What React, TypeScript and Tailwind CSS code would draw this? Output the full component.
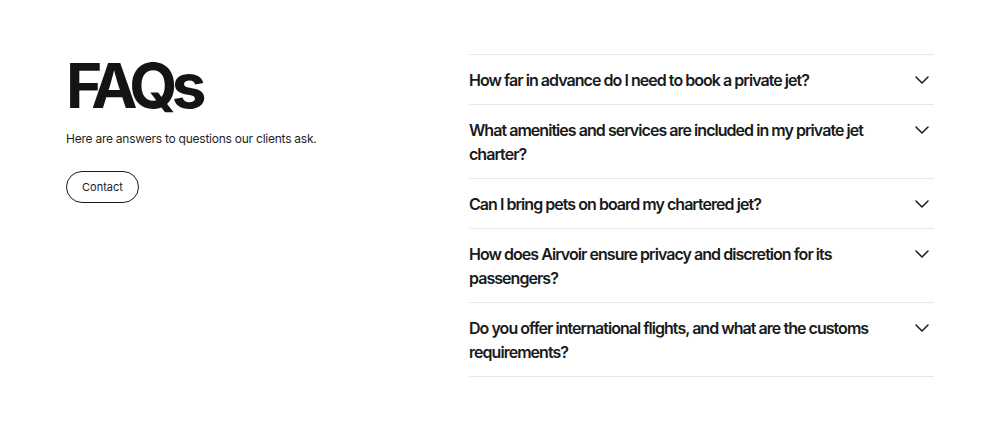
import React, { useState } from 'react';
import { ChevronDown } from 'lucide-react';

const questions = [
  'How far in advance do I need to book a private jet?',
  'What amenities and services are included in my private jet charter?',
  'Can I bring pets on board my chartered jet?',
  'How does Airvoir ensure privacy and discretion for its passengers?',
  'Do you offer international flights, and what are the customs requirements?',
];

function FaqRow({ q }: { q: string }) {
  const [open, setOpen] = useState(false);
  return (
    <div className="border-b border-[#e8e8e8]">
      <button
        onClick={() => setOpen(!open)}
        className="w-full flex items-start justify-between gap-6 py-[12.5px] text-left"
      >
        <span className="text-[16px] leading-[24px] font-semibold tracking-[-0.06em] text-[#1a1a1a]">
          {q}
        </span>
        <ChevronDown className="w-6 h-6 shrink-0 text-[#1a1a1a]" strokeWidth={1.5} />
      </button>
    </div>
  );
}

export default function App() {
  return (
    <div className="min-h-screen bg-white font-['Inter',sans-serif] text-[#1a1a1a]">
      <div className="max-w-[868px] mx-auto flex pt-[54px]">
        <div className="w-[403px] shrink-0 pt-[1px]">
          <h1 className="text-[62px] leading-[62px] font-bold tracking-[-0.09em] text-[#141414]">FAQs</h1>
          <p className="mt-[12px] text-[12px] leading-[20px] tracking-[-0.02em] text-[#1f1f1f]">
            Here are answers to questions our clients ask.
          </p>
          <button className="mt-[22px] h-8 px-[15px] rounded-full border border-[#1a1a1a] text-[11px] text-[#1a1a1a]">
            Contact
          </button>
        </div>
        <div className="flex-1 border-t border-[#e8e8e8]">
          {questions.map(q => (
            <FaqRow key={q} q={q} />
          ))}
        </div>
      </div>
    </div>
  );
}
